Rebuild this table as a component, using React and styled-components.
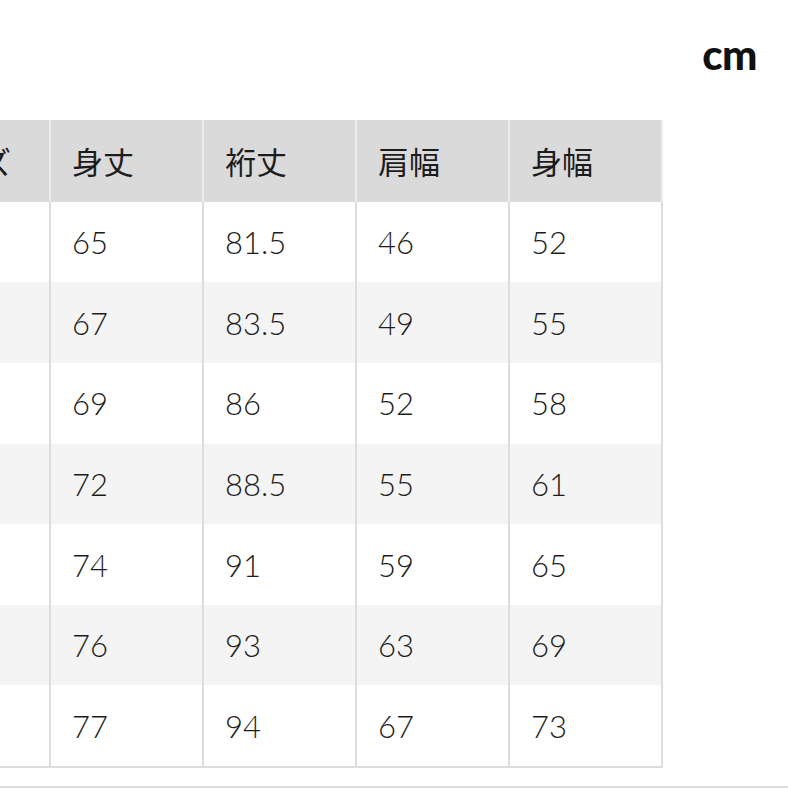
import React from 'react';
import styled, { createGlobalStyle } from 'styled-components';

const GlobalStyle = createGlobalStyle`
  html, body {
    margin: 0;
    padding: 0;
    background: #ffffff;
    overflow: hidden;
  }
  body {
    font-family: Lato, "Noto Sans CJK JP", sans-serif;
    color: #1e1e1e;
  }
`;

const Page = styled.div`
  width: 788px;
  height: 788px;
  display: flex;
  flex-direction: column;
  overflow: hidden;
`;

const UnitBar = styled.div`
  display: flex;
  justify-content: flex-end;
  height: 120px;
  padding: 30px 31px 0 0;
  box-sizing: border-box;
`;

const Unit = styled.span`
  font-family: Lato, sans-serif;
  font-weight: 900;
  font-size: 42px;
  line-height: 48px;
  color: #111;
  letter-spacing: -0.5px;
`;

const Table = styled.div`
  display: grid;
  grid-template-columns: repeat(5, 153px);
  grid-template-rows: 82px;
  grid-auto-rows: 80.6px;
  margin-left: -102px;
  width: 765px;
  border-bottom: 2px solid #dcdcdc;
`;

const Cell = styled.div`
  display: flex;
  align-items: center;
  padding-left: 21px;
  box-sizing: border-box;
  border-right: 2px solid ${(p) => (p.$head ? '#ececec' : '#dddddd')};
  background: ${(p) => (p.$head ? '#dadada' : p.$shade ? '#f4f4f4' : '#ffffff')};
  font-family: ${(p) => (p.$head ? '"Noto Sans CJK JP"' : 'Lato, "Noto Sans CJK JP"')}, sans-serif;
  font-size: 31px;
  font-weight: ${(p) => (p.$head ? 400 : 300)};
  color: #1c1c1c;
  white-space: nowrap;
`;

const BottomRule = styled.div`
  margin-top: 18px;
  height: 2px;
  width: 100%;
  background: #dedede;
`;

const headers = ['サイズ', '身丈', '裄丈', '肩幅', '身幅'];
// the size column sits mostly off the left edge; its values are not visible
const rows = [
  ['', '65', '81.5', '46', '52'],
  ['', '67', '83.5', '49', '55'],
  ['', '69', '86', '52', '58'],
  ['', '72', '88.5', '55', '61'],
  ['', '74', '91', '59', '65'],
  ['', '76', '93', '63', '69'],
  ['', '77', '94', '67', '73'],
];

export default function App() {
  return (
    <>
      <GlobalStyle />
      <Page>
        <UnitBar>
          <Unit>cm</Unit>
        </UnitBar>
        <Table>
          {headers.map((h) => (
            <Cell key={h} $head>
              {h}
            </Cell>
          ))}
          {rows.map((r, i) =>
            r.map((v, j) => (
              <Cell key={`${i}-${j}`} $shade={i % 2 === 1}>
                {v}
              </Cell>
            ))
          )}
        </Table>
        <BottomRule />
      </Page>
    </>
  );
}
